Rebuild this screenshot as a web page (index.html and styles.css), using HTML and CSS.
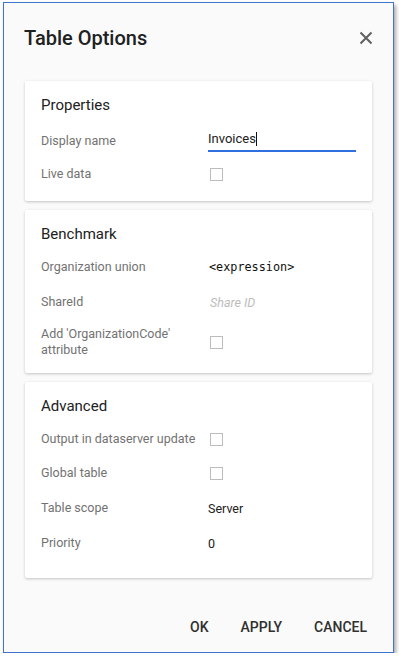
FILE: index.html
```html
<!DOCTYPE html>
<html lang="en">
    <head>
        <meta charset="UTF-8">
        <meta name="viewport" content="width=device-width, initial-scale=1.0">
        <title>Table Options</title>
        <link rel="stylesheet" href="styles.css">
    </head>
    <body>
        <div class="dialog">
            <div class="dialog-header">
                <h2>Table Options</h2>
                <button class="close" title="Close">
                    <svg width="14" height="14" viewBox="0 0 14 14">
                        <path d="M1.5 1.5 L12.5 12.5 M12.5 1.5 L1.5 12.5" stroke="#5f5f5f" stroke-width="2" fill="none"/>
                    </svg>
                </button>
            </div>

            <div class="dialog-body">
                <div class="card">
                    <h3>Properties</h3>
                    <div class="row row-input">
                        <label>Display name</label>
                        <div class="text-field">Invoices<span class="caret"></span></div>
                    </div>
                    <div class="row">
                        <label>Live data</label>
                        <span class="checkbox"></span>
                    </div>
                </div>

                <div class="card">
                    <h3>Benchmark</h3>
                    <div class="row">
                        <label>Organization union</label>
                        <span class="value mono">&lt;expression&gt;</span>
                    </div>
                    <div class="row row-text">
                        <label>ShareId</label>
                        <span class="value placeholder">Share ID</span>
                    </div>
                    <div class="row row-tall">
                        <label>Add 'OrganizationCode' attribute</label>
                        <span class="checkbox"></span>
                    </div>
                </div>

                <div class="card">
                    <h3>Advanced</h3>
                    <div class="row">
                        <label>Output in dataserver update</label>
                        <span class="checkbox"></span>
                    </div>
                    <div class="row">
                        <label>Global table</label>
                        <span class="checkbox"></span>
                    </div>
                    <div class="row row-text">
                        <label>Table scope</label>
                        <span class="value">Server</span>
                    </div>
                    <div class="row">
                        <label>Priority</label>
                        <span class="value">0</span>
                    </div>
                </div>
            </div>

            <div class="dialog-footer">
                <button>OK</button>
                <button>Apply</button>
                <button>Cancel</button>
            </div>
        </div>
    </body>
</html>
```

FILE: styles.css
```css
body {
    margin: 0;
    padding: 2px 0 0 3px;
    font-family: Roboto, "Liberation Sans", sans-serif;
    background: white;
}
.dialog {
    width: 391px;
    height: 651px;
    box-sizing: border-box;
    border: 1px solid #3f76cc;
    background: #fafafa;
    box-shadow: 2px 3px 4px rgba(0, 0, 0, 0.35);
    display: flex;
    flex-direction: column;
}
.dialog-header {
    display: flex;
    justify-content: space-between;
    align-items: center;
    padding: 23px 20px 0 20px;
}
.dialog-header h2 {
    margin: 0;
    font-size: 20px;
    font-weight: 500;
    line-height: 24px;
    color: #212121;
}
.close {
    border: none;
    background: none;
    padding: 0;
    width: 14px;
    height: 14px;
    display: flex;
}
.dialog-body {
    padding: 31px 21px 0 21px;
}
.card {
    background: white;
    border-radius: 2px;
    box-shadow: 0 1px 3px rgba(0, 0, 0, 0.22);
    padding: 14px 16px 10px;
    margin-bottom: 9px;
}
.card:last-child {
    padding-bottom: 18px;
}
.card h3 {
    margin: 0 0 6px;
    font-size: 15px;
    font-weight: 400;
    line-height: 20px;
    color: #212121;
}
.row {
    display: grid;
    grid-template-columns: 167px 1fr;
    align-items: center;
    min-height: 34px;
}
.row-input {
    min-height: 32px;
    padding-top: 4px;
}
.row-text {
    min-height: 36px;
}
.row-tall {
    padding: 5px 0 4px;
}
.row label {
    font-size: 12.5px;
    line-height: 16.5px;
    color: #727272;
}
.value {
    font-size: 12.5px;
    color: #212121;
}
.mono {
    font-family: "DejaVu Sans Mono", monospace;
    font-size: 11.8px;
    color: #111;
    padding-left: 1px;
}
.placeholder {
    font-style: italic;
    color: #bdbdbd;
    padding-left: 2px;
}
.text-field {
    font-size: 13px;
    line-height: 18px;
    color: #212121;
    padding-bottom: 2px;
    border-bottom: 2px solid #2f6fdf;
}
.caret {
    display: inline-block;
    width: 0;
    height: 14px;
    border-left: 1px solid #111;
    vertical-align: -3px;
}
.checkbox {
    width: 13px;
    height: 13px;
    margin-left: 2px;
    border: 1px solid #bdbdbd;
    box-sizing: border-box;
    background: white;
}
.dialog-footer {
    margin-top: auto;
    display: flex;
    justify-content: flex-end;
    padding: 0 10px 7px 0;
}
.dialog-footer button {
    border: none;
    background: none;
    padding: 0 16px;
    height: 36px;
    font-family: Roboto, "Liberation Sans", sans-serif;
    font-size: 14px;
    font-weight: 500;
    text-transform: uppercase;
    color: #303030;
    cursor: pointer;
}
```
